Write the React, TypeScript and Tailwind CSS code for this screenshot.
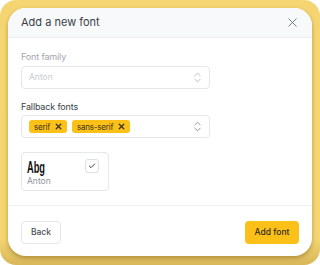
import { X, ChevronsUpDown, Check } from 'lucide-react';

function Tag({ label }: { label: string }) {
  return (
    <span className="flex items-center gap-[4px] h-[13px] pl-[5px] pr-[4px] rounded-[3px] bg-[#fcc118] text-[8px] tracking-[-0.2px] text-[#3b3320] leading-none">
      {label}
      <X className="w-[9px] h-[9px]" strokeWidth={3.5} />
    </span>
  );
}

export default function App() {
  return (
    <div className="w-[320px] h-[265px] bg-white overflow-hidden font-['Inter',sans-serif]">
      <div className="h-full rounded-[16px] pt-2 px-2 bg-gradient-to-b from-[#f4d572] from-[90%] to-[#d8b75a]">
        <div className="h-[248px] flex flex-col bg-white rounded-[18px] overflow-hidden shadow-[0_2px_4px_rgba(110,85,10,0.45)]">
          <div className="h-[30px] flex items-center justify-between pl-[13px] pr-[12px] bg-[#f8f9fb] border-b border-[#eceef1]">
            <span className="text-[11px] text-[#3a3f47]">Add a new font</span>
            <X className="w-[15px] h-[15px] text-[#6b7280]" strokeWidth={1.5} />
          </div>

          <div className="flex-1 px-[13px] pt-[12px]">
            <div className="text-[9px] tracking-[-0.15px] leading-[14px] text-[#a3a7ae]">Font family</div>
            <div className="mt-[2px] w-[189px] h-[23px] flex items-center justify-between pl-[7px] pr-[5px] border border-[#e5e7eb] rounded-[4px]">
              <span className="text-[8.5px] text-[#c8cbd0]">Anton</span>
              <ChevronsUpDown className="w-[13px] h-[13px] text-[#b9bdc4]" strokeWidth={1.8} />
            </div>

            <div className="mt-[11px] text-[9px] tracking-[-0.15px] leading-[14px] text-[#3a3f47]">Fallback fonts</div>
            <div className="mt-[1px] w-[189px] h-[23px] flex items-center justify-between pl-[7px] pr-[5px] border border-[#e5e7eb] rounded-[4px]">
              <div className="flex items-center gap-[5px]">
                <Tag label="serif" />
                <Tag label="sans-serif" />
              </div>
              <ChevronsUpDown className="w-[13px] h-[13px] text-[#8d929a]" strokeWidth={1.8} />
            </div>

            <div className="mt-[14px] w-[88px] h-[39px] border border-[#e5e7eb] rounded-[4px] pl-[5px] pt-[6px] relative">
              <div className="h-[16px] leading-[16px]">
                <span className="inline-block origin-left scale-x-[0.58] text-[16px] font-bold text-[#111] font-['Liberation_Sans',sans-serif]">
                  Abg
                </span>
              </div>
              <div className="text-[8.5px] leading-[12px] text-[#8f949b]">Anton</div>
              <div className="absolute right-[9px] top-[6px] w-[14px] h-[14px] border border-[#dcdfe3] rounded-[3px] flex items-center justify-center">
                <Check className="w-[8px] h-[8px] text-[#3a3f47]" strokeWidth={3} />
              </div>
            </div>
          </div>

          <div className="h-[51px] border-t border-[#f0f1f3] flex items-start justify-between px-[13px] pt-[15px]">
            <button className="h-[23px] w-[40px] border border-[#e3e5e8] rounded-[4px] text-[8.5px] font-medium text-[#4b5058] bg-white">
              Back
            </button>
            <button className="h-[23px] w-[54px] rounded-[4px] text-[8.5px] font-medium text-[#2f2a1c] bg-[#fcc118]">
              Add font
            </button>
          </div>
        </div>
      </div>
    </div>
  );
}
